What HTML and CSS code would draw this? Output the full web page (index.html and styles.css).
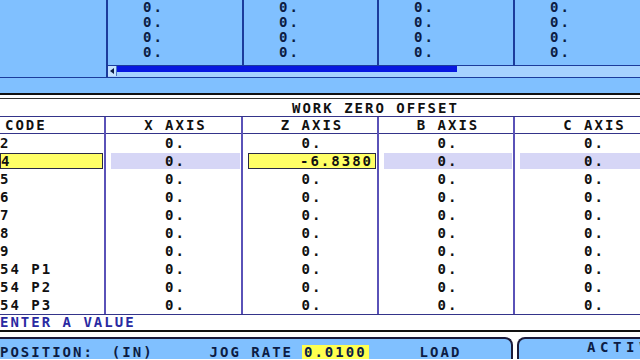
FILE: index.html
```html
<!DOCTYPE html>
<html lang="en">
<head>
    <meta charset="UTF-8">
    <meta name="viewport" content="width=device-width, initial-scale=1.0">
    <title>Work Zero Offset</title>
    <link rel="stylesheet" href="styles.css">
</head>
<body>
    <div class="screen">
        <section class="top-panel">
            <div class="top-grid">
                <div class="top-col blank"></div>
                <div class="top-col"><span>0.</span><span>0.</span><span>0.</span><span>0.</span></div>
                <div class="top-col"><span>0.</span><span>0.</span><span>0.</span><span>0.</span></div>
                <div class="top-col"><span>0.</span><span>0.</span><span>0.</span><span>0.</span></div>
                <div class="top-col"><span>0.</span><span>0.</span><span>0.</span><span>0.</span></div>
            </div>
            <div class="scroll-row">
                <div class="blank"></div>
                <div class="scroll-track">
                    <span class="scroll-arrow"></span>
                    <span class="scroll-thumb"></span>
                </div>
            </div>
        </section>
        <div class="frame-line"></div>

        <section class="offsets">
            <div class="offsets-title">WORK ZERO OFFSET</div>
            <div class="row head">
                <div class="cell code">CODE</div>
                <div class="cell">X AXIS</div>
                <div class="cell">Z AXIS</div>
                <div class="cell">B AXIS</div>
                <div class="cell">C AXIS</div>
            </div>
            <div class="row">
                <div class="cell code"><span class="val">2</span></div>
                <div class="cell"><span class="val">0.</span></div>
                <div class="cell"><span class="val">0.</span></div>
                <div class="cell"><span class="val">0.</span></div>
                <div class="cell"><span class="val">0.</span></div>
            </div>
            <div class="row active">
                <div class="cell code"><span class="val cursor">4</span></div>
                <div class="cell"><span class="val">0.</span></div>
                <div class="cell"><span class="val cursor num">-6.8380</span></div>
                <div class="cell"><span class="val">0.</span></div>
                <div class="cell"><span class="val">0.</span></div>
            </div>
            <div class="row">
                <div class="cell code"><span class="val">5</span></div>
                <div class="cell"><span class="val">0.</span></div>
                <div class="cell"><span class="val">0.</span></div>
                <div class="cell"><span class="val">0.</span></div>
                <div class="cell"><span class="val">0.</span></div>
            </div>
            <div class="row">
                <div class="cell code"><span class="val">6</span></div>
                <div class="cell"><span class="val">0.</span></div>
                <div class="cell"><span class="val">0.</span></div>
                <div class="cell"><span class="val">0.</span></div>
                <div class="cell"><span class="val">0.</span></div>
            </div>
            <div class="row">
                <div class="cell code"><span class="val">7</span></div>
                <div class="cell"><span class="val">0.</span></div>
                <div class="cell"><span class="val">0.</span></div>
                <div class="cell"><span class="val">0.</span></div>
                <div class="cell"><span class="val">0.</span></div>
            </div>
            <div class="row">
                <div class="cell code"><span class="val">8</span></div>
                <div class="cell"><span class="val">0.</span></div>
                <div class="cell"><span class="val">0.</span></div>
                <div class="cell"><span class="val">0.</span></div>
                <div class="cell"><span class="val">0.</span></div>
            </div>
            <div class="row">
                <div class="cell code"><span class="val">9</span></div>
                <div class="cell"><span class="val">0.</span></div>
                <div class="cell"><span class="val">0.</span></div>
                <div class="cell"><span class="val">0.</span></div>
                <div class="cell"><span class="val">0.</span></div>
            </div>
            <div class="row">
                <div class="cell code"><span class="val">54 P1</span></div>
                <div class="cell"><span class="val">0.</span></div>
                <div class="cell"><span class="val">0.</span></div>
                <div class="cell"><span class="val">0.</span></div>
                <div class="cell"><span class="val">0.</span></div>
            </div>
            <div class="row">
                <div class="cell code"><span class="val">54 P2</span></div>
                <div class="cell"><span class="val">0.</span></div>
                <div class="cell"><span class="val">0.</span></div>
                <div class="cell"><span class="val">0.</span></div>
                <div class="cell"><span class="val">0.</span></div>
            </div>
            <div class="row last">
                <div class="cell code"><span class="val">54 P3</span></div>
                <div class="cell"><span class="val">0.</span></div>
                <div class="cell"><span class="val">0.</span></div>
                <div class="cell"><span class="val">0.</span></div>
                <div class="cell"><span class="val">0.</span></div>
            </div>
        </section>

        <div class="prompt">ENTER A VALUE</div>

        <footer class="status">
            <div class="box position">
                <span>POSITION:</span>
                <span class="units">(IN)</span>
                <span class="jog">JOG RATE</span>
                <span class="jog-value">0.0100</span>
                <span class="load">LOAD</span>
            </div>
            <div class="box active-codes">
                <span>ACTIVE CODES</span>
            </div>
        </footer>
    </div>
</body>
</html>
```

FILE: styles.css
```css
body {
    margin: 0;
    padding: 0;
    background-color: #fff;
    font-family: "DejaVu Sans Mono", "Liberation Mono", monospace;
    font-weight: bold;
    font-size: 14px;
    letter-spacing: 2px;
    color: #111;
}

.screen {
    width: 640px;
    height: 360px;
    overflow: hidden;
}

/* --- top panel (machine data) --- */
.top-panel {
    background-color: #80c0ff;
    height: 93px;
    border-bottom: 2px solid #111;
    color: #0c1c44;
}

.top-grid {
    display: grid;
    grid-template-columns: 106px 136px 135px 136px 1fr;
    height: 66px;
}

.top-col {
    display: flex;
    flex-direction: column;
    border-left: 2px solid #1c3c9c;
    border-bottom: 1px solid #1c3c9c;
    padding-left: 35px;
    line-height: 15px;
}

.top-col.blank {
    border: none;
}

.scroll-row {
    display: grid;
    grid-template-columns: 106px 1fr;
    height: 11px;
    border-bottom: 1px solid #1c3c9c;
}

.scroll-track {
    display: flex;
    align-items: flex-start;
    border-left: 2px solid #1c3c9c;
    background-color: #a6d2ff;
}

.scroll-arrow {
    width: 8px;
    height: 10px;
    background-color: #c4e2ff;
    border-right: 1px solid #4a78c8;
    position: relative;
}

.scroll-arrow::before {
    content: "";
    position: absolute;
    left: 2px;
    top: 2px;
    border-top: 3px solid transparent;
    border-bottom: 3px solid transparent;
    border-right: 4px solid #0c1c44;
}

.scroll-thumb {
    width: 340px;
    height: 6px;
    background-color: #0818e0;
}

.frame-line {
    height: 1px;
    margin-top: 3px;
    background-color: #333;
}

/* --- work zero offset table --- */
.offsets-title {
    height: 17px;
    line-height: 19px;
    padding-left: 292px;
}

.row {
    display: grid;
    grid-template-columns: 104px 137px 136px 136px 157px;
    height: 18px;
}

.row.head {
    height: 16px;
    border-top: 1px solid #34348a;
    border-bottom: 1px solid #34348a;
}

.row.last {
    border-bottom: 1px solid #34348a;
}

.cell {
    box-sizing: border-box;
    border-left: 2px solid #5a52b8;
    padding: 1px 1px 1px 5px;
    text-align: center;
    line-height: 16px;
}

.cell.code {
    border-left: none;
    padding-left: 0;
    text-align: left;
}

.row.head .cell {
    padding-top: 0;
}

.row.head .cell.code {
    padding-left: 5px;
}

.val {
    display: block;
    height: 16px;
    box-sizing: border-box;
}

.row.active .val {
    background-color: #d6d6f6;
}

.row.active .val.cursor {
    background-color: #ffff66;
    border: 1px solid #2a2a44;
    line-height: 14px;
}

.val.num {
    text-align: right;
    padding-right: 2px;
}

.prompt {
    height: 14px;
    line-height: 15px;
    color: #2a2aa2;
}

/* --- status bar --- */
.status {
    display: flex;
    gap: 4px;
    border-top: 2px solid #111;
    margin-top: 1px;
    padding-top: 5px;
}

.box {
    height: 22px;
    box-sizing: border-box;
    background-color: #80c0ff;
    border: 2px solid #1a1a3a;
    border-bottom: none;
    border-radius: 8px 8px 0 0;
    color: #0c1c44;
    line-height: 14px;
}

.box.position {
    display: flex;
    align-items: flex-start;
    flex: 0 0 523px;
    margin-left: -10px;
    padding: 6px 0 0 8px;
}

.units {
    margin-left: 18px;
}

.jog {
    margin-left: 56px;
}

.jog-value {
    margin-left: 9px;
    padding: 0 2px 0 2px;
    background-color: #ffff50;
}

.load {
    margin-left: 51px;
}

.box.active-codes {
    flex: 1 0 auto;
    margin-right: -40px;
    padding: 1px 0 0 68px;
    letter-spacing: 4.6px;
    white-space: nowrap;
}
```
